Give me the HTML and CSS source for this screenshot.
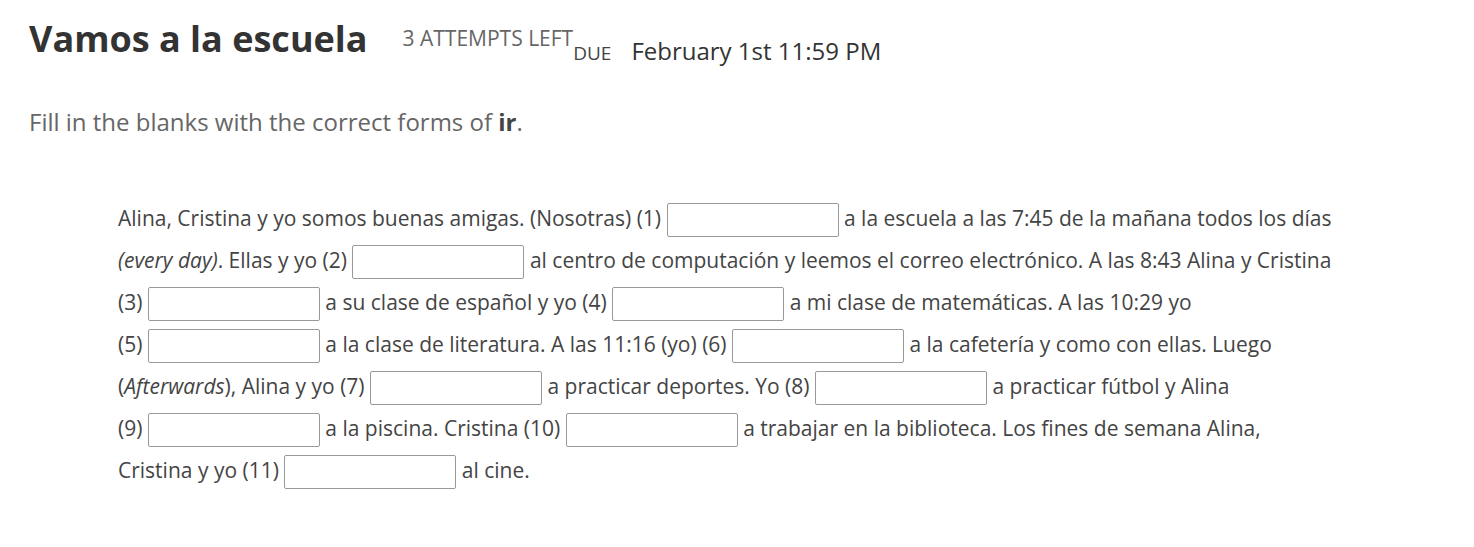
FILE: index.html
```html
<!DOCTYPE html>
<html lang="es">
<head>
<meta charset="utf-8">
<title>Vamos a la escuela</title>
<link rel="stylesheet" href="styles.css">
</head>
<body>
<main class="page">
  <header class="header"><h1 class="title">Vamos a la escuela</h1><span class="attempts">3 ATTEMPTS LEFT</span><span class="due"><span class="due-label">DUE</span><span class="due-date">February 1st 11:59 PM</span></span></header>
  <p class="instructions">Fill in the blanks with the correct forms of <b>ir</b>.</p>
  <p class="passage">Alina, Cristina y yo somos buenas amigas. (Nosotras) <span class="slot">(1) <input class="blank" type="text" aria-label="1"></span> a la escuela a las 7:45 de la mañana todos los días <i>(every day)</i>. Ellas y yo <span class="slot">(2) <input class="blank" type="text" aria-label="2"></span> al centro de computación y leemos el correo electrónico. A las 8:43 Alina y Cristina <span class="slot">(3) <input class="blank" type="text" aria-label="3"></span> a su clase de español y yo <span class="slot">(4) <input class="blank" type="text" aria-label="4"></span> a mi clase de matemáticas. A las 10:29 yo <span class="slot">(5) <input class="blank" type="text" aria-label="5"></span> a la clase de literatura. A las 11:16 (yo) <span class="slot">(6) <input class="blank" type="text" aria-label="6"></span> a la cafetería y como con ellas. Luego (<i>Afterwards</i>), Alina y yo <span class="slot">(7) <input class="blank" type="text" aria-label="7"></span> a practicar deportes. Yo <span class="slot">(8) <input class="blank" type="text" aria-label="8"></span> a practicar fútbol y Alina <span class="slot">(9) <input class="blank" type="text" aria-label="9"></span> a la piscina. Cristina <span class="slot">(10) <input class="blank" type="text" aria-label="10"></span> a trabajar en la biblioteca. Los fines de semana Alina, Cristina y yo <span class="slot">(11) <input class="blank" type="text" aria-label="11"></span> al cine.</p>
</main>
</body>
</html>
```
FILE: styles.css
```css
html, body {
  margin: 0;
  padding: 0;
  background: #ffffff;
}
body {
  font-family: "Open Sans", "Noto Sans", sans-serif;
  color: #333333;
}
.page {
  padding: 14px 0 0 29px;
}
.header {
  white-space: nowrap;
}
.title {
  display: inline;
  margin: 0;
  font-size: 36px;
  font-weight: 700;
  color: #333333;
  line-height: 49px;
}
.attempts {
  margin-left: 35px;
  font-size: 21px;
  color: #666666;
  vertical-align: 6px;
}
.due {
  vertical-align: -8px;
}
.due-label {
  font-size: 19px;
  color: #444444;
  margin-left: 0;
}
.due-date {
  margin-left: 20px;
  font-size: 24px;
  color: #333333;
}
.instructions {
  margin: 40px 0 0 0;
  font-size: 24px;
  line-height: 30px;
  color: #666666;
}
.instructions b {
  color: #444444;
}
.passage {
  margin: 60px 0 0 89px;
  width: 1220px;
  font-size: 21px;
  line-height: 42px;
  color: #444444;
}
.slot {
  white-space: nowrap;
}
.blank {
  box-sizing: border-box;
  width: 172px;
  height: 34px;
  margin: 0;
  padding: 0 6px;
  border: 1px solid #999999;
  border-radius: 2px;
  background: #ffffff;
  vertical-align: middle;
  font: inherit;
}
```
